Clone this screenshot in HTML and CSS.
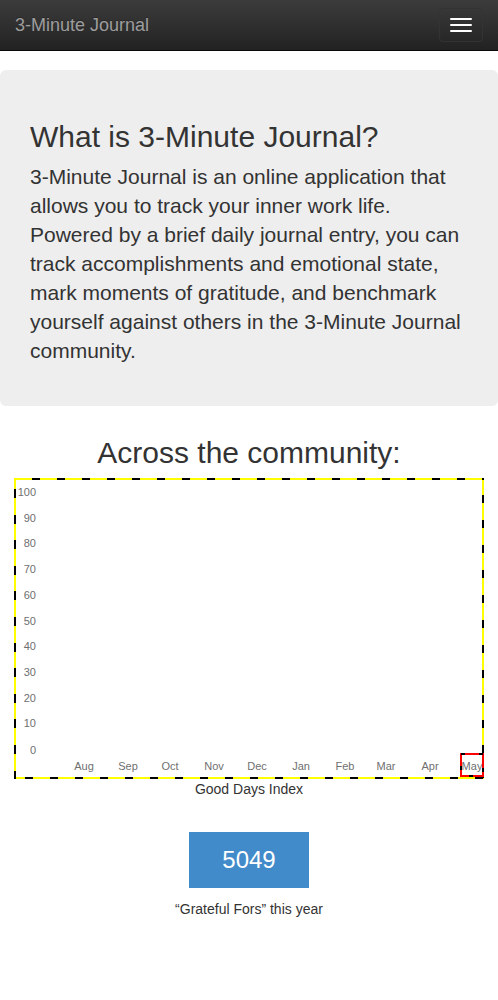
FILE: index.html
```html
<!DOCTYPE html>
<html lang="en">
<head>
<meta charset="utf-8">
<title>3-Minute Journal</title>
<link rel="stylesheet" href="styles.css">
</head>
<body>
<nav class="navbar">
  <a class="brand" href="#">3-Minute Journal</a>
  <button class="toggle" type="button" aria-label="Toggle navigation">
    <span class="bar"></span><span class="bar"></span><span class="bar"></span>
  </button>
</nav>

<section class="jumbotron">
  <h1>What is 3-Minute Journal?</h1>
  <p>3-Minute Journal is an online application that allows you to track your inner work life. Powered by a brief daily journal entry, you can track accomplishments and emotional state, mark moments of gratitude, and benchmark yourself against others in the 3-Minute Journal community.</p>
</section>

<section class="community">
  <h2>Across the community:</h2>
  <div class="chart-frame">
    <svg class="chart" width="466" height="297" viewBox="0 0 466 297">
      <g class="ylab" text-anchor="end">
        <text x="20" y="16">100</text>
        <text x="20" y="41.7">90</text>
        <text x="20" y="67.4">80</text>
        <text x="20" y="93.1">70</text>
        <text x="20" y="118.8">60</text>
        <text x="20" y="144.5">50</text>
        <text x="20" y="170.2">40</text>
        <text x="20" y="195.9">30</text>
        <text x="20" y="221.6">20</text>
        <text x="20" y="247.3">10</text>
        <text x="20" y="273.5">0</text>
      </g>
      <g class="xlab" text-anchor="middle">
        <text x="68" y="290">Aug</text>
        <text x="112" y="290">Sep</text>
        <text x="154" y="290">Oct</text>
        <text x="198" y="290">Nov</text>
        <text x="241" y="290">Dec</text>
        <text x="285" y="290">Jan</text>
        <text x="329" y="290">Feb</text>
        <text x="370" y="290">Mar</text>
        <text x="414" y="290">Apr</text>
        <text x="456" y="290">May</text>
      </g>
      <rect x="445" y="274" width="22" height="22" fill="none" stroke="#ff0000" stroke-width="2"/>
      <rect x="445" y="274" width="22" height="22" fill="none" stroke="#000" stroke-width="2" stroke-dasharray="4 14" stroke-dashoffset="-18"/>
    </svg>
  </div>
  <div class="caption">Good Days Index</div>

  <div class="stat">
    <div class="stat-box">5049</div>
    <div class="stat-label">“Grateful Fors” this year</div>
  </div>
</section>
</body>
</html>
```

FILE: styles.css
```css
* { box-sizing: border-box; }

body {
  margin: 0;
  font-family: "Liberation Sans", Arial, Helvetica, sans-serif;
  font-size: 14px;
  line-height: 20px;
  color: #333;
  background: #fff;
}

.navbar {
  height: 51px;
  display: flex;
  align-items: flex-start;
  justify-content: space-between;
  background: linear-gradient(to bottom, #3c3c3c 0%, #222 100%);
  border-bottom: 1px solid #080808;
  margin-bottom: 19px;
}

.brand {
  padding: 15px;
  font-size: 18px;
  line-height: 20px;
  color: #9d9d9d;
  text-decoration: none;
  text-shadow: 0 -1px 0 rgba(0, 0, 0, 0.25);
}

.toggle {
  margin: 8px 15px 0 0;
  width: 44px;
  height: 34px;
  padding: 9px 10px;
  background: transparent;
  border: 1px solid #333;
  border-radius: 4px;
  display: flex;
  flex-direction: column;
  gap: 4px;
}

.bar {
  display: block;
  width: 22px;
  height: 2px;
  border-radius: 1px;
  background: #fff;
}

.jumbotron {
  background: #eee;
  border-radius: 6px;
  padding: 30px 30px 30px;
}

.jumbotron h1 {
  margin: 20px 0 9px;
  font-size: 30px;
  line-height: 33px;
  font-weight: 500;
  color: #333;
}

.jumbotron p {
  margin: 0 0 11px;
  font-size: 21px;
  line-height: 29px;
  font-weight: 400;
  color: #333;
}

.community {
  display: flex;
  flex-direction: column;
  align-items: center;
  padding-top: 30px;
}

.community h2 {
  margin: 0 0 9px;
  font-size: 30px;
  line-height: 33px;
  font-weight: 500;
  color: #333;
}

/* yellow frame with black dashes, drawn as gradient stripes on each edge */
.chart-frame {
  width: 470px;
  height: 301px;
  padding: 2px;
  background:
    repeating-linear-gradient(90deg, #000 0 8px, transparent 8px 25px) 18px 0 / calc(100% - 18px) 2px no-repeat,
    repeating-linear-gradient(90deg, #000 0 8px, transparent 8px 25px) 11px 100% / calc(100% - 11px) 2px no-repeat,
    repeating-linear-gradient(180deg, #000 0 9px, transparent 9px 25.6px) 0 11px / 2px calc(100% - 11px) no-repeat,
    repeating-linear-gradient(180deg, #000 0 8px, transparent 8px 25px) 100% 17px / 2px calc(100% - 17px) no-repeat,
    #ffff00;
}

.chart {
  display: block;
  background: #fff;
  overflow: visible;
}

.chart text {
  font-family: "Liberation Sans", Arial, sans-serif;
  font-size: 11px;
  fill: #6f6f6f;
}

.caption {
  font-size: 14px;
  line-height: 20px;
  color: #333;
}

.stat {
  margin-top: 33px;
  display: flex;
  flex-direction: column;
  align-items: center;
}

.stat-box {
  width: 120px;
  height: 56px;
  background: #428bca;
  color: #fff;
  font-size: 24px;
  line-height: 56px;
  text-align: center;
}

.stat-label {
  margin-top: 11px;
  font-size: 14px;
  line-height: 20px;
  color: #333;
}
```
